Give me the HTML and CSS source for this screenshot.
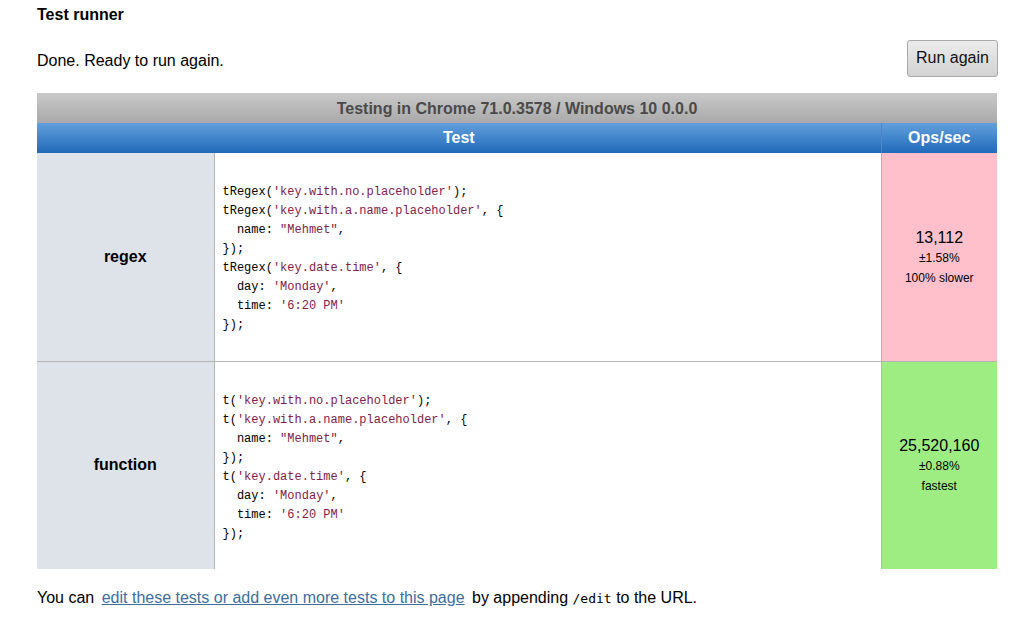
FILE: index.html
```html
<!DOCTYPE html>
<html>
<head>
<meta charset="utf-8">
<link rel="stylesheet" href="styles.css">
</head>
<body>
<div class="page">
  <h1 class="title">Test runner</h1>
  <div class="status-row">
    <p class="status">Done. Ready to run again.</p>
    <button class="run-btn">Run again</button>
  </div>
  <table class="results">
    <caption class="caption">Testing in Chrome 71.0.3578 / Windows 10 0.0.0</caption>
    <colgroup>
      <col class="col-name">
      <col class="col-code">
      <col class="col-ops">
    </colgroup>
    <thead>
      <tr><th colspan="2" class="h-test">Test</th><th class="h-ops">Ops/sec</th></tr>
    </thead>
    <tbody>
      <tr>
        <th class="name">regex</th>
        <td class="code"><pre>tRegex(<span class="s">'key.with.no.placeholder'</span>);
tRegex(<span class="s">'key.with.a.name.placeholder'</span>, {
  name: <span class="s">"Mehmet"</span>,
});
tRegex(<span class="s">'key.date.time'</span>, {
  day: <span class="s">'Monday'</span>,
  time: <span class="s">'6:20 PM'</span>
});</pre></td>
        <td class="ops slow"><span class="num">13,112</span><small>±1.58%</small><small>100% slower</small></td>
      </tr>
      <tr>
        <th class="name">function</th>
        <td class="code"><pre>t(<span class="s">'key.with.no.placeholder'</span>);
t(<span class="s">'key.with.a.name.placeholder'</span>, {
  name: <span class="s">"Mehmet"</span>,
});
t(<span class="s">'key.date.time'</span>, {
  day: <span class="s">'Monday'</span>,
  time: <span class="s">'6:20 PM'</span>
});</pre></td>
        <td class="ops fast"><span class="num">25,520,160</span><small>±0.88%</small><small>fastest</small></td>
      </tr>
    </tbody>
  </table>
  <p class="footer">You can <a href="#" class="link">edit these tests or add even more tests to this page</a> by appending <code>/edit</code> to the URL.</p>
</div>
</body>
</html>
```

FILE: styles.css
```css
html, body {
  margin: 0;
  padding: 0;
  background: #fff;
}
body {
  font-family: "Liberation Sans", Arial, sans-serif;
  color: #000;
}
.page {
  padding: 0 32px 0 37px;
  width: 960px;
}
.title {
  font-size: 16px;
  font-weight: bold;
  margin: 0;
  padding-top: 6px;
  line-height: 18px;
}
.status-row {
  display: flex;
  justify-content: space-between;
  align-items: center;
  margin-top: 15px;
  height: 38px;
}
.status {
  margin: 0;
  font-size: 16px;
  line-height: 20px;
  padding-top: 5px;
}
.run-btn {
  font-family: "Liberation Sans", Arial, sans-serif;
  font-size: 16px;
  height: 37px;
  width: 91px;
  padding: 0;
  margin-right: -1px;
  border: 1px solid #a9a9a9;
  border-radius: 3px;
  background: linear-gradient(#ececec, #d2d2d2);
  color: #111;
}
.results {
  margin-top: 16px;
  width: 960px;
  border-collapse: collapse;
  table-layout: fixed;
}
.col-name { width: 177px; }
.col-ops { width: 116px; }
.caption {
  height: 30px;
  line-height: 31px;
  font-size: 16px;
  font-weight: bold;
  color: #4a4a4a;
  background: linear-gradient(#c9c9c9, #a9a9a9);
  text-align: center;
  padding: 0;
}
thead th {
  height: 30px;
  padding: 0;
  font-size: 16px;
  font-weight: bold;
  color: #fff;
  background: linear-gradient(#62a0dc, #2069ba);
  text-align: center;
}
.h-ops {
  border-left: 1px solid #4a86c8;
}
.name {
  background: #dee3ea;
  font-size: 16px;
  font-weight: bold;
  text-align: center;
  border-right: 1px solid #b4b4b4;
  padding: 0;
}
tbody tr {
  height: 208px;
}
tbody tr + tr {
  border-top: 1px solid #b4b4b4;
}
.code {
  padding: 0 8px;
  vertical-align: middle;
}
.code pre {
  margin: 0;
  padding-top: 5px;
  font-family: "Liberation Mono", "DejaVu Sans Mono", monospace;
  font-size: 12px;
  line-height: 19px;
  color: #000;
}
.s {
  color: #7f1c4c;
}
.ops {
  text-align: center;
  vertical-align: middle;
  border-left: 1px solid #b4b4b4;
  padding: 2px 0 0;
}
.ops .num {
  display: block;
  font-size: 16px;
  line-height: 20px;
}
.ops small {
  display: block;
  font-size: 12px;
  line-height: 20px;
}
.slow { background: #ffc0cb; }
.fast { background: #9eed82; }
.footer {
  margin: 19px 0 0;
  font-size: 16px;
  line-height: 20px;
}
.link {
  color: #3c6e9e;
  margin: 0 3px;
}
.footer code {
  font-family: "DejaVu Sans Mono", monospace;
  font-size: 13px;
}
```
